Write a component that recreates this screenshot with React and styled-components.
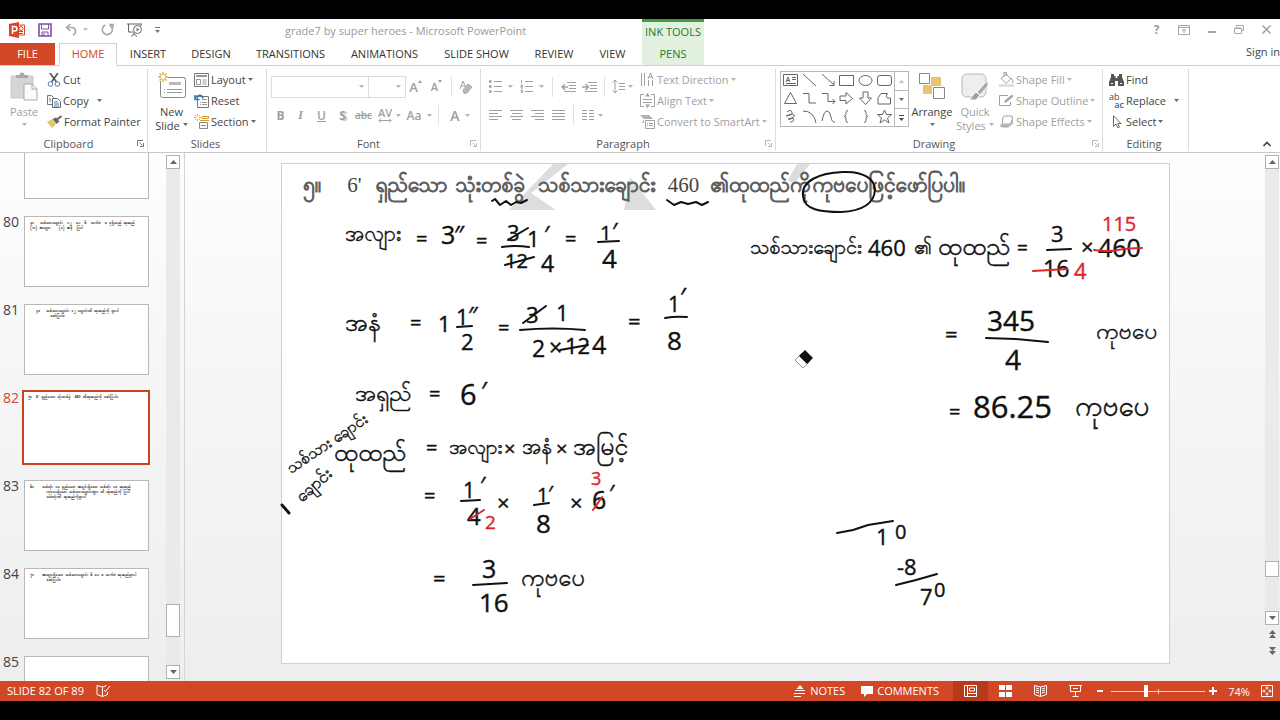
import React, { useState } from "react";
import styled, { createGlobalStyle } from "styled-components";

const GlobalStyle = createGlobalStyle`
  * {
    box-sizing: border-box;
  }

  body {
    margin: 0;
    background-color: #000000;
    font-family: "Open Sans", "Noto Sans", sans-serif;
    font-size: 11px;
    color: #444444;
  }

  button, select, input {
    font: inherit;
    color: inherit;
    border: none;
    background: none;
    padding: 0;
    margin: 0;
  }
`;

const Screen = styled.div`
  display: flex;
  flex-direction: column;
  height: 100vh;
  padding: 19px 0;
  background-color: #000000;
`;

const Window = styled.div`
  display: flex;
  flex-direction: column;
  flex: 1;
  min-height: 0;
  background-color: #ffffff;
  overflow: hidden;
`;

/* ---------- title bar ---------- */

const TitleBar = styled.header`
  display: flex;
  height: 24px;
  flex-shrink: 0;
`;

const QuickAccess = styled.div`
  display: flex;
  align-items: center;
  gap: 13px;
  width: 285px;
  padding: 0 0 3px 9px;
`;

const ButtonPair = styled.div`
  display: flex;
  align-items: center;
  gap: 4px;
`;

const IconButton = styled.button`
  display: flex;
  align-items: center;
  justify-content: center;
  min-width: ${(props) => props.$w || 0}px;
  height: ${(props) => props.$h || 18}px;
  color: ${(props) => props.$color || "inherit"};
`;

const FileTitle = styled.h1`
  width: 357px;
  margin: 0;
  font-size: 11px;
  font-weight: 400;
  line-height: 24px;
  color: #999999;
`;

const ContextTitle = styled.div`
  width: 62px;
  border-top: 3px solid #3f9a48;
  background-color: #e2f0e0;
  color: #1f7a26;
  line-height: 19px;
  text-align: center;
`;

const WindowButtons = styled.div`
  display: flex;
  justify-content: flex-end;
  align-items: center;
  flex: 1;
  padding: 0 0 3px;
`;

/* ---------- tabs ---------- */

const Tabs = styled.nav`
  display: flex;
  height: 23px;
  flex-shrink: 0;
  border-bottom: 1px solid #d0d0d0;
`;

const Tab = styled.button`
  width: ${(props) => props.$w}px;
  height: 22px;
  padding-bottom: 1px;
  white-space: nowrap;
  color: #333333;
`;

const FileTab = styled(Tab)`
  background-color: #d24726;
  color: #ffffff;
  margin-right: 4px;
`;

const ActiveTab = styled(Tab)`
  height: 23px;
  padding-bottom: 2px;
  border: 1px solid #d0d0d0;
  border-bottom-color: #ffffff;
  background-color: #ffffff;
  color: #d24726;
`;

const ContextTab = styled(Tab)`
  margin-left: 3px;
  background-color: #e2f0e0;
  color: #1f7a26;
`;

const SignIn = styled.button`
  margin-left: auto;
  height: 16px;
  white-space: nowrap;
`;

/* ---------- ribbon ---------- */

const Ribbon = styled.div`
  display: flex;
  height: 87px;
  flex-shrink: 0;
  padding-top: 3px;
  border-bottom: 1px solid #c8c8c8;
`;

const Group = styled.section`
  display: flex;
  flex-direction: column;
  width: ${(props) => props.$w}px;
  height: 82px;
  flex-shrink: 0;
  border-right: 1px solid #dcdcdc;
  color: ${(props) => (props.$off ? "#a0a0a0" : "#444444")};
`;

const GroupBody = styled.div`
  display: flex;
  height: 67px;
  flex-shrink: 0;
  padding-left: ${(props) => props.$left}px;
`;

const GroupFoot = styled.footer`
  display: flex;
  align-items: center;
  height: 15px;
  padding-right: 3px;
  color: #555555;
`;

const GroupName = styled.span`
  flex: 1;
  text-align: center;
`;

const BigButton = styled.button`
  display: flex;
  flex-direction: column;
  align-items: center;
  width: ${(props) => props.$w}px;
  height: 67px;
  padding-top: 3px;
  line-height: 14px;
  color: ${(props) => (props.$off ? "#a0a0a0" : "#444444")};

  svg:first-child {
    margin-bottom: 3px;
  }
`;

const CaretLine = styled.span`
  display: flex;
  align-items: center;
  gap: 3px;
  height: 14px;
`;

const Stack = styled.div`
  display: flex;
  flex-direction: column;
  margin-left: ${(props) => props.$left || 0}px;
`;

const RowButton = styled.button`
  display: flex;
  align-items: center;
  gap: 2px;
  height: 21px;
  white-space: nowrap;
  color: ${(props) => (props.$off ? "#a0a0a0" : "#444444")};
`;

const ToolRow = styled.div`
  display: flex;
  align-items: center;
  height: ${(props) => props.$h}px;
`;

const Divider = styled.span`
  width: 1px;
  height: 20px;
  margin: 0 ${(props) => props.$gap || 7}px;
  background-color: #e0e0e0;
`;

const Combo = styled.label`
  display: flex;
  align-items: center;
  width: ${(props) => props.$w}px;
  height: 22px;
  margin-right: -1px;
  padding-right: 4px;
  border: 1px solid #dcdcdc;
`;

const ComboSelect = styled.select`
  flex: 1;
  min-width: 0;
  height: 20px;
  appearance: none;
  outline: none;
`;

const Glyph = styled.button`
  width: ${(props) => props.$w || 21}px;
  height: 20px;
  font-size: ${(props) => props.$size || 12}px;
  font-weight: ${(props) => (props.$bold ? 700 : 600)};
  font-style: ${(props) => (props.$italic ? "italic" : "normal")};
  text-decoration: ${(props) => props.$line || "none"};
  text-shadow: ${(props) => (props.$shadow ? "2px 1px 1px #cccccc" : "none")};
  font-family: ${(props) => (props.$italic ? '"Liberation Serif", serif' : "inherit")};
  color: #a0a0a0;
`;

const SizeButton = styled.button`
  display: flex;
  align-items: flex-start;
  justify-content: center;
  width: 21px;
  height: 18px;
  font-size: ${(props) => props.$size}px;
  font-weight: 600;
  line-height: 18px;

  svg {
    margin-top: 2px;
  }
`;

const SpacingButton = styled.button`
  display: flex;
  flex-direction: column;
  align-items: center;
  width: 22px;
  font-weight: 600;
  line-height: 11px;
`;

const Gallery = styled.div`
  display: flex;
  width: 129px;
  height: 56px;
  margin-top: 2px;
  border: 1px solid #b8b8b8;
`;

const ShapeGrid = styled.div`
  display: grid;
  grid-template-columns: repeat(6, 1fr);
  grid-template-rows: repeat(3, 1fr);
  flex: 1;
`;

const GalleryBar = styled.div`
  display: grid;
  grid-template-rows: repeat(3, 1fr);
  width: 14px;
  border-left: 1px solid #b8b8b8;

  button + button {
    border-top: 1px solid #b8b8b8;
  }
`;

const RibbonEnd = styled.div`
  display: flex;
  flex: 1;
  align-items: flex-end;
  justify-content: flex-end;
  padding: 0 9px 4px 0;
`;

/* ---------- work area ---------- */

const Work = styled.main`
  display: flex;
  flex: 1;
  min-height: 0;
  background: linear-gradient(#fefefe, #f6f6f6 40%, #eeeeee);
`;

const ThumbPane = styled.aside`
  display: flex;
  width: 185px;
  flex-shrink: 0;
  border-right: 1px solid #d4d4d4;
`;

const ThumbList = styled.ol`
  flex: 1;
  margin: 0;
  padding: 0;
  list-style: none;
  overflow: hidden;

  li:first-child {
    margin-top: -27px;
  }
`;

const ThumbItem = styled.li`
  display: flex;
  height: 88px;
  color: ${(props) => (props.$active ? "#d24726" : "#444444")};
`;

const ThumbNumber = styled.span`
  width: 22px;
  padding-left: 3px;
  font-size: 14px;
  line-height: 15px;
`;

const Thumb = styled.button`
  display: block;
  width: ${(props) => (props.$active ? 128 : 125)}px;
  height: ${(props) => (props.$active ? 75 : 71)}px;
  margin: ${(props) => (props.$active ? "0" : "2px 0 0 2px")};
  padding: ${(props) => (props.$active ? "3px 4px" : "4px 5px")};
  border: ${(props) => (props.$active ? "2px solid #c8431f" : "1px solid #b8b8b8")};
  background-color: #ffffff;
  color: #222222;
  font-family: "Padauk", "Noto Sans Myanmar", sans-serif;
  font-size: 4px;
  font-weight: 700;
  line-height: 5px;
  text-align: left;
  white-space: pre;
  overflow: hidden;
`;

const ThumbText = styled.span`
  display: flex;
  flex-direction: column;
  height: 100%;
`;

const ScrollBar = styled.div`
  display: flex;
  flex-direction: column;
  width: 14px;
  flex-shrink: 0;
  margin: ${(props) => props.$margin};
`;

const ScrollButton = styled.button`
  display: flex;
  align-items: center;
  justify-content: center;
  height: 14px;
  border: 1px solid #b0b0b0;
  background-color: #ffffff;
  color: #666666;
`;

const ScrollTrack = styled.div`
  display: flex;
  flex-direction: column;
  justify-content: flex-end;
  flex: 1;
  padding-bottom: ${(props) => props.$after}px;
  background-color: #eaeaea;
`;

const ScrollThumb = styled.div`
  height: ${(props) => props.$h}px;
  border: 1px solid #b0b0b0;
  background-color: #ffffff;
`;

const JumpButton = styled.button`
  display: flex;
  justify-content: center;
  align-items: center;
  height: 17px;
  color: #666666;
`;

const Stage = styled.div`
  flex: 1;
  min-width: 0;
  padding: 10px 95px 0 96px;
`;

const Slide = styled.article`
  position: relative;
  aspect-ratio: 889 / 501;
  border: 1px solid #d0d0d0;
  background-color: #ffffff;
`;

const SlideTitle = styled.h2`
  display: flex;
  position: relative;
  margin: 0;
  padding: 6px 0 0 21px;
  font-family: "Liberation Serif", "Padauk", "Noto Sans Myanmar", serif;
  font-size: 21px;
  font-weight: 400;
  line-height: 30px;
  white-space: nowrap;
  color: #444444;
`;

const TitlePart = styled.span`
  margin-right: ${(props) => props.$after}px;
  -webkit-text-stroke: ${(props) => (props.$digits ? "0" : "1px #606060")};
`;

const Layer = styled.svg`
  position: absolute;
  inset: 0;
  width: 100%;
  height: 100%;
  overflow: visible;
  font-family: "Open Sans", "Padauk", "Noto Sans Myanmar", sans-serif;
`;

/* ---------- status bar ---------- */

const StatusBar = styled.footer`
  display: flex;
  align-items: center;
  height: 20px;
  flex-shrink: 0;
  padding: 0 7px;
  background-color: #d24726;
  color: #ffffff;
`;

const StatusButton = styled.button`
  display: flex;
  align-items: center;
  gap: 4px;
  height: 20px;
  padding-bottom: 1px;
  margin-right: ${(props) => props.$after || 0}px;
`;

const StatusEnd = styled.div`
  display: flex;
  align-items: center;
  margin-left: auto;
`;

const ViewButton = styled.button`
  display: flex;
  align-items: center;
  justify-content: center;
  width: 35px;
  height: 20px;
  background-color: ${(props) => (props.$on ? "#b73a1b" : "transparent")};
`;

const Zoom = styled.input`
  width: 94px;
  height: 12px;
  margin: 0 4px;
  appearance: none;
  background: linear-gradient(#f6cfc5, #f6cfc5) center / 100% 1px no-repeat,
    linear-gradient(#f6cfc5, #f6cfc5) center / 1px 5px no-repeat;

  &::-webkit-slider-thumb {
    appearance: none;
    width: 4px;
    height: 12px;
    background-color: #ffffff;
  }
`;

const ZoomValue = styled.output`
  width: 44px;
  text-align: center;
`;

/* ---------- icons ---------- */

function Icon({ w = 16, h = 16, sw = 1, children }) {
  return (
    <svg
      width={w}
      height={h}
      viewBox={`0 0 ${w} ${h}`}
      fill="none"
      stroke="currentColor"
      strokeWidth={sw}
      aria-hidden="true"
    >
      {children}
    </svg>
  );
}

const Caret = () => (
  <Icon w={5} h={3}>
    <path d="M0 0h5L2.500 3z" fill="currentColor" fillOpacity=".8" stroke="none" />
  </Icon>
);

const Launcher = ({ off }) => (
  <IconButton $h={12} $color={off ? "#b8b8b8" : "#777777"} aria-label="More options">
    <Icon w={7} h={7}>
      <path d="M.5 6V.5H6M2.500 2.500l3 3M6.500 3v3.500H3" />
    </Icon>
  </IconButton>
);

const UpTriangle = () => (
  <Icon w={7} h={4}>
    <path d="M0 4h7L3.500 0z" fill="currentColor" stroke="none" />
  </Icon>
);

const DownTriangle = () => (
  <Icon w={7} h={4}>
    <path d="M0 0h7L3.500 4z" fill="currentColor" stroke="none" />
  </Icon>
);

const AppIcon = () => (
  <Icon w={16} h={16}>
    <path d="M9 3h6.500v10H9" fill="#fff" stroke="#d24726" />
    <path d="M10 9.500h4M10 11.500h4" stroke="#d24726" />
    <circle cx="12" cy="6.500" r="2" stroke="#d24726" />
    <path d="M0 2L10 0v16L0 14z" fill="#d24726" stroke="none" />
    <path d="M3.500 12V4.500h2.200a2 2 0 010 4.500H3.500" stroke="#fff" strokeWidth="1.500" />
  </Icon>
);

const SaveIcon = () => (
  <Icon w={14} h={14}>
    <path d="M1 1h12v12H1z" stroke="#7f4fa8" strokeWidth="1.600" />
    <path d="M3.500 1v5h7V1M4 13V9h6v4M6 10v3" stroke="#7f4fa8" />
  </Icon>
);

const UndoIcon = () => (
  <Icon w={14} h={13} sw={1.6}>
    <path d="M5.500 1L1.500 4.500l4 3.500M2 4.500h6a4 4 0 010 7.500" />
  </Icon>
);

const RedoIcon = () => (
  <Icon w={13} h={13} sw={1.6}>
    <path d="M8.500 1.500h3.500v3.500M4.500 2a5 5 0 105 .8l2-1.500" />
  </Icon>
);

const ShowIcon = () => (
  <Icon w={15} h={14}>
    <path d="M0 1h15M1.500 1v8H6M14 1v2M7 9v2M4 13.500l3-2.500 3 2.500" />
    <circle cx="10.500" cy="6.500" r="4" fill="#fff" />
    <path d="M9.500 4.500v4L12.500 6.500z" fill="#4c9a7a" stroke="none" />
  </Icon>
);

const PasteIcon = () => (
  <Icon w={28} h={30}>
    <path d="M1 4h22v22H1z" fill="#d6d4d6" stroke="#cccccc" />
    <path d="M6 6V3h3.500a2.500 2.500 0 015 0H18v3z" fill="#a8a8a8" stroke="none" />
    <path d="M14 12h8l5 5v11H14z" fill="#fafafa" stroke="#aaaaaa" />
    <path d="M22 12v5h5" stroke="#aaaaaa" />
  </Icon>
);

const CutIcon = () => (
  <Icon w={14} h={14}>
    <path d="M3 0l6.500 9M11 0L4.500 9" stroke="#555" strokeWidth="1.600" />
    <circle cx="3.500" cy="11" r="2.300" stroke="#4a7ebb" />
    <circle cx="10.500" cy="11" r="2.300" stroke="#4a7ebb" />
  </Icon>
);

const CopyIcon = () => (
  <Icon w={14} h={14}>
    <path d="M.5 1.500h4l2 2v7h-6z" fill="#fff" stroke="#777" />
    <path d="M5.500 4.500h5l3 3v6h-8z" fill="#fff" stroke="#666" />
    <path d="M2 5h2M2 7h2M7 8h4M7 10h5M7 12h5" stroke="#4a7ebb" />
  </Icon>
);

const PainterIcon = () => (
  <Icon w={15} h={14}>
    <path d="M0 7l5-3 4 5-4 4z" fill="#e8c56d" stroke="none" />
    <path d="M5.500 4L9 2.500l3.500 4L9.500 9z" fill="#666" stroke="none" />
    <path d="M10 4.500L14.500 1" stroke="#666" strokeWidth="2" />
  </Icon>
);

const Spark = () => (
  <path
    d="M5 0v3M5 7v3M0 5h3M7 5h3M1.500 1.500l2 2M6.500 6.500l2 2M8.500 1.500l-2 2M3.500 6.500l-2 2"
    stroke="#e3a73a"
    strokeWidth="1.300"
  />
);

const NewSlideIcon = () => (
  <Icon w={28} h={30}>
    <rect x="2.500" y="5.500" width="25" height="20" rx="2" fill="#fff" stroke="#888" />
    <path d="M11 11.500h12" stroke="#bbb" strokeWidth="3" />
    <path d="M6 17.500h1M9 17.500h15M6 20.500h1M9 20.500h15" stroke="#999" />
    <circle cx="5" cy="5" r="5" fill="#fff" stroke="none" />
    <Spark />
  </Icon>
);

const LayoutIcon = () => (
  <Icon w={15} h={14}>
    <path d="M.5.500h14v13H.5z" stroke="#777" />
    <path d="M2 3h11" stroke="#999" strokeWidth="2" />
    <path d="M2.500 6.500h4v5h-4zM8.500 7h4M8.500 9h4M8.500 11h4" stroke="#999" />
  </Icon>
);

const ResetIcon = () => (
  <Icon w={15} h={14}>
    <path d="M3.500 2.500h11v11h-11z" fill="#fff" stroke="#777" />
    <path d="M8 5.500h5M6 8.500h1M8 8.500h5M6 10.500h1M8 10.500h5" stroke="#999" />
    <path d="M1 1v4.500h4.500M1 5.500c1-5 7-5.500 8-1" stroke="#3878b8" strokeWidth="1.600" />
  </Icon>
);

const SectionIcon = () => (
  <Icon w={15} h={15}>
    <path d="M8 2.500h6.500v2H8zM6 6.500h9" stroke="#d89b3c" />
    <path d="M5.500 8.500h8v6h-8zM7 11.500h5" stroke="#888" />
    <g transform="scale(.7)">
      <Spark />
    </g>
  </Icon>
);

const EraserIcon = () => (
  <Icon w={14} h={14}>
    <path d="M1 9L4 1l3 7M2 6h4" />
    <path d="M4 10l5-6 4 3-5 6-3 .5z" fill="#b8b8b8" stroke="#aaa" />
  </Icon>
);

const Bullets = ({ numbered }) => (
  <Icon w={13} h={13}>
    <path d="M5 1.500h8M5 6.500h8M5 11.500h8" />
    {numbered ? (
      <path d="M1.500 0v3M.5 5h2v1.500H1V8h2M.5 10h2v3h-2M1 11.500h1" />
    ) : (
      <path d="M0 1.500h2.500M0 6.500h2.500M0 11.500h2.500" strokeWidth="2.500" />
    )}
  </Icon>
);

const Indent = ({ back }) => (
  <Icon w={15} h={12}>
    <path d="M6 1.500h9M8 4.500h7M8 7.500h7M3 10.500h12" />
    <path
      d={back ? "M7 6H1M4 3L1 6l3 3" : "M0 6h6M3.500 3l3 3-3 3"}
      strokeWidth="1.400"
    />
  </Icon>
);

const Spacing = () => (
  <Icon w={13} h={15}>
    <path d="M3 1v13M.5 3.500L3 1l2.500 2.500M.5 11.500L3 14l2.500-2.500M7 4.500h6M7 7.500h6M7 10.500h6" />
  </Icon>
);

const lineSets = {
  left: "M0 .5h13M0 3.500h9M0 6.500h13M0 9.500h9",
  center: "M0 .5h13M2 3.500h9M0 6.500h13M2 9.500h9",
  right: "M0 .5h13M4 3.500h9M0 6.500h13M4 9.500h9",
  full: "M0 .5h13M0 3.500h13M0 6.500h13M0 9.500h13",
  columns: "M0 .5h5M0 3.500h5M0 6.500h5M0 9.500h5M7 .5h5M7 3.500h5M7 6.500h5M7 9.500h5",
};

const Lines = ({ kind }) => (
  <Icon w={13} h={10}>
    <path d={lineSets[kind]} />
  </Icon>
);

const DirectionIcon = () => (
  <Icon w={15} h={15}>
    <path d="M1.500 1v13M4.500 1v13M8.500 8v6M12.500 8v6M8 7l2.500-6L13 7M9 5h3" />
  </Icon>
);

const AlignTextIcon = () => (
  <Icon w={15} h={15}>
    <path d="M4 1.500H.5v12H4M11 1.500h3.500v12H11M3 6.500h9M3 9.500h9" />
    <path d="M7.500 0L5 3.500h5zM7.500 15L5 11.500h5z" fill="currentColor" stroke="none" />
  </Icon>
);

const SmartArtIcon = () => (
  <Icon w={15} h={15}>
    <path d="M0 1h9l4 4H4v4H2l2-4z" fill="#b0b0b0" stroke="none" />
    <path d="M5.500 6.500h9v8h-9zM7 9.500h1M9 9.500h4M7 11.500h1M9 11.500h4" />
  </Icon>
);

const ArrangeIcon = () => (
  <Icon w={26} h={30}>
    <path d="M12 5h10v9h-9v8H4v-9h8z" fill="#e9c46a" stroke="none" />
    <path d="M.5 1.500h10v10H.5zM14.500 15.500h11v11h-11z" fill="#fff" stroke="#888" />
  </Icon>
);

const StylesIcon = () => (
  <Icon w={28} h={30}>
    <rect x="1" y="2" width="24" height="23" rx="5" fill="#efedef" stroke="#b8b8b8" />
    <path d="M27 9v5l-8 9-3-3 8-9z" fill="#a8a8a8" stroke="#fff" />
    <path d="M15 20l4 3-4 5H8c3-1 3-6 7-8z" fill="#a0a0a0" stroke="#fff" />
  </Icon>
);

const FillIcon = () => (
  <Icon w={15} h={15}>
    <path d="M2 6.500L7 2l5 5-5 4.500zM5 5V0.500h2.500V4M12 6c2 2 2 3 1.500 5" />
    <path d="M0 13.500h15" stroke="#e0e0e0" strokeWidth="3" />
  </Icon>
);

const OutlineIcon = () => (
  <Icon w={15} h={14}>
    <path d="M9 1.500H.5v10h11V8" />
    <path d="M5 9l1-3 7-5.500 1.500 2L8 8z" fill="#a8a8a8" stroke="none" />
  </Icon>
);

const EffectsIcon = () => (
  <Icon w={15} h={14}>
    <path d="M3 9l1-7q.5-1 2-1h6q2 0 1.500 2l-1.500 5q-.5 1-2 1z" />
    <path d="M1 9.500q0 3 3 3h5l5-4V4l-3 5.500z" fill="#b0b0b0" stroke="none" />
  </Icon>
);

const FindIcon = () => (
  <Icon w={15} h={13}>
    <path
      d="M2 1h3v2h1.500v2h2V3H10V1h3v3l2 5v4H9V8H6v5H0V9l2-5z"
      fill="#555"
      stroke="none"
    />
    <path d="M2 10.500h2M11 10.500h2" stroke="#fff" />
  </Icon>
);

const SelectIcon = () => (
  <Icon w={15} h={14}>
    <path d="M4.500.800v10.500L7 9l2 4 1.500-1L8.800 8.500H12z" fill="#fff" stroke="#666" />
  </Icon>
);

const ReplaceMark = styled.span`
  display: grid;
  width: 15px;
  font-size: 9px;
  line-height: 8px;
  text-align: left;

  b {
    font-weight: 600;
    color: #2f62a8;
    text-align: right;
  }
`;

const shapes = [
  "M.5 1.500h14v11H.5zM3 9l2-5 2 5M4 7.500h2M9 4.500h4M9 6.500h4M3 10.500h10",
  "M1 1l13 12",
  "M1 1l12 11M13 8v4.500H8.500",
  "M.5 2.500h14v10H.5z",
  "M1 7.500a6.500 5 0 1013 0a6.500 5 0 10-13 0z",
  "M3 2.500h9q2.500 0 2.500 2.500v5q0 2.500-2.500 2.500H3q-2.500 0-2.500-2.500V5Q.5 2.500 3 2.500z",
  "M7.500 1.500l6 11h-12z",
  "M1 2.500h6v9.500h7",
  "M1 2.500h6v8h7M11.500 8l2.500 2.500-2.500 2.500",
  "M1 5h6V1.500l6.500 6L7 13v-3.500H1z",
  "M5 1v6H1.500l6 6.500 6-6.500H10V1z",
  "M4 2.500h6.500q-2.500 3 0 4.500h3v6H1V7z",
  "M4 3q4-3 5 0t-6 4q6-3 8-1t-6 4q2 1 5-1q2 4-3 4",
  "M1 2q11 0 13 12",
  "M1 12q2-10 5-10t4 6 4 5",
  "M9 1.500q-2 0-2 2v2q0 2-2 2 2 0 2 2v2q0 2 2 2",
  "M6 1.500q2 0 2 2v2q0 2 2 2-2 0-2 2v2q0 2-2 2",
  "M7.500 1l2 4.500h5l-4 3.500 1.500 5-4.500-3L3 14l1.500-5-4-3.500h5z",
];

/* ---------- slide content ---------- */

// x, baseline, size, text; written with the pen on slide 82
const notes = [
  [345, 241, 21, "အလျား"],
  [416, 246, 20, "="],
  [441, 244, 25, "3"],
  [454, 244, 25, "″"],
  [476, 248, 20, "="],
  [507, 241, 22, "3"],
  [527, 247, 22, "1"],
  [544, 243, 24, "′"],
  [505, 268, 20, "12"],
  [541, 272, 23, "4"],
  [565, 246, 20, "="],
  [600, 240, 20, "1"],
  [612, 240, 24, "′"],
  [602, 268, 26, "4"],
  [345, 331, 25, "အနံ"],
  [410, 330, 20, "="],
  [438, 332, 22, "1"],
  [456, 325, 22, "1"],
  [468, 324, 24, "″"],
  [461, 350, 22, "2"],
  [498, 335, 20, "="],
  [526, 323, 22, "3"],
  [556, 321, 22, "1"],
  [532, 357, 23, "2"],
  [549, 356, 23, "×"],
  [565, 354, 22, "12"],
  [592, 354, 25, "4"],
  [628, 329, 22, "="],
  [668, 312, 21, "1"],
  [680, 306, 26, "′"],
  [667, 350, 26, "8"],
  [355, 401, 23, "အရှည်"],
  [429, 401, 20, "="],
  [460, 405, 29, "6"],
  [481, 400, 26, "′"],
  [334, 461, 25, "ထုထည်"],
  [426, 455, 20, "="],
  [449, 454, 20, "အလျား"],
  [504, 456, 20, "×"],
  [522, 454, 21, "အနံ"],
  [556, 456, 20, "×"],
  [573, 455, 25, "အမြင့်"],
  [424, 503, 20, "="],
  [463, 498, 21, "1"],
  [480, 494, 24, "′"],
  [467, 525, 24, "4"],
  [497, 511, 22, "×"],
  [537, 502, 20, "1"],
  [548, 502, 22, "′"],
  [536, 533, 26, "8"],
  [570, 511, 22, "×"],
  [592, 509, 25, "6"],
  [609, 502, 24, "′"],
  [433, 586, 22, "="],
  [482, 578, 25, "3"],
  [479, 612, 26, "16"],
  [521, 586, 24, "ကုဗပေ"],
  [750, 254, 20, "သစ်သားချောင်း"],
  [868, 256, 22, "460"],
  [914, 254, 20, "၏"],
  [938, 255, 25, "ထုထည်"],
  [1017, 254, 19, "="],
  [1051, 242, 22, "3"],
  [1043, 277, 23, "16"],
  [1081, 255, 22, "×"],
  [1098, 257, 25, "460"],
  [945, 342, 22, "="],
  [987, 331, 28, "345"],
  [1005, 370, 28, "4"],
  [1096, 339, 23, "ကုဗပေ"],
  [949, 419, 20, "="],
  [973, 418, 31, "86.25"],
  [1075, 416, 28, "ကုဗပေ"],
  [876, 545, 22, "1"],
  [895, 539, 20, "0"],
  [897, 575, 22, "-8"],
  [920, 605, 22, "7"],
  [934, 597, 20, "0"],
];

const redNotes = [
  [485, 529, 19, "2"],
  [591, 485, 18, "3"],
  [1102, 231, 20, "115"],
  [1074, 279, 22, "4"],
];

const tiltedNotes = [
  [291, 474, 16, "သစ်သား ချောင်း", -34],
  [302, 503, 17, "ချောင်း", -42],
];

const strokes = [
  "M492 201l3-2 5 6 6-4 5 4 5-3 5 1 6-3",
  "M667 200l7 5 7-3 7 2 8-2 6 3 6-3",
  "M803 196c-2-15 16-23 40-24c22-1 32 8 32 18c-1 14-14 21-34 22c-20 0-37-2-38-16z",
  "M502 247q13-2 27 0M598 242l21-1M457 327l15-1M520 330q33-3 65 0M665 318q10-2 22-1",
  "M508 240l20-12M505 265l29-8M523 323l23-17M560 350l28-5",
  "M461 501l19-1M534 505l15-2M473 585l34-2M1047 250l24-1M986 338l30 1 32 3",
  "M837 533l16-3 15-5 25-4M896 585l20-5 21-6",
];

const redStrokes = [
  "M470 519l14-9M593 510l9-13",
  "M1033 271l34-2M1094 250q14 2 24 0t24-2",
];

function Ink() {
  return (
    <Layer viewBox="282 164 887 499" preserveAspectRatio="none">
      <g fill="#111111" stroke="#111111" strokeWidth=".4">
        {notes.map(([x, y, size, text]) => (
          <text key={`${x}-${y}`} x={x} y={y} fontSize={size}>
            {text}
          </text>
        ))}
        {tiltedNotes.map(([x, y, size, text, angle]) => (
          <text key={x} fontSize={size} transform={`translate(${x} ${y}) rotate(${angle})`}>
            {text}
          </text>
        ))}
      </g>
      <g fill="#e0262b" stroke="#e0262b" strokeWidth=".4">
        {redNotes.map(([x, y, size, text]) => (
          <text key={x} x={x} y={y} fontSize={size}>
            {text}
          </text>
        ))}
      </g>
      <g fill="none" stroke="#111111" strokeWidth="2" strokeLinecap="round" strokeLinejoin="round">
        {strokes.map((d) => (
          <path key={d} d={d} />
        ))}
        <path d="M282 505l7 8" strokeWidth="3" />
      </g>
      <g fill="none" stroke="#e0262b" strokeWidth="2" strokeLinecap="round">
        {redStrokes.map((d) => (
          <path key={d} d={d} />
        ))}
      </g>
      <path d="M795 360l7-7 8 8-7 7z" fill="#fff" stroke="#999" />
      <path d="M799 356l6-6 8 8-6 6z" fill="#111" />
    </Layer>
  );
}

function Watermark() {
  return (
    <Layer viewBox="282 164 887 499" preserveAspectRatio="none">
      <path
        d="M553 164h15l-58 46h-1zM531 193l25 17h-47zM630 177l26 33h-32zM797 164h13l-16 20-6-4z"
        fill="#dddddd"
      />
    </Layer>
  );
}

// text and the space after it
const titleParts = [
  ["၅။", 26],
  ["6'", 14, true],
  ["ရှည်သော", 8],
  ["သုံးတစ်ခွဲ", 13],
  ["သစ်သားချောင်း", 12],
  ["460", 11, true],
  ["၏ထုထည်ကို", 2],
  ["ကုဗပေဖြင့်ဖော်ပြပါ။", 0],
];

const thumbs = [
  { id: 79, lines: [] },
  {
    id: 80,
    lines: [
      "၃။   သစ်သားချောင်း  ၁၂  ပေ  ၆  လက်မ  ၈ ခုရှိသည် ထုထည်",
      "(က) အလျား    (ခ) အနံ  ပြပါ",
    ],
  },
  {
    id: 81,
    lines: [
      "   ၄။   သစ်သားချောင်း ၁၂ ချောင်း၏ ထုထည်ကို ရှာပါ",
      "          ဖော်ပြပါ။",
    ],
  },
  { id: 82, lines: ["၅။  6' ရှည်သော သုံးတစ်ခွဲ  460 ၏ထုထည်ကို ဖော်ပြပါ။"] },
  {
    id: 83,
    lines: [
      "၆။    သစ်တုံး ၁၀ ရှည်သော အချင်းရှိသော သစ်တုံး ၁၀ ထုထည်",
      "        ကုဗပေရှိသော သစ်သားချောင်းများ ၏ ထုထည်ကို ပြပါ",
      "        သစ်တုံး၏ ထုထည်ကိုရှာပါ",
    ],
  },
  {
    id: 84,
    lines: [
      "၇။    အလျားရှိသော သစ်သားချောင်း ၆ ပေ ၈ လက်မ ထုထည်ရှာပါ",
      "        ဖော်ပြပါ။",
    ],
  },
  { id: 85, lines: [] },
];

const tabs = [
  ["INSERT", 62],
  ["DESIGN", 64],
  ["TRANSITIONS", 95],
  ["ANIMATIONS", 93],
  ["SLIDE SHOW", 91],
  ["REVIEW", 64],
  ["VIEW", 53],
];

function Header() {
  return (
    <>
      <TitleBar>
        <QuickAccess>
          <AppIcon />
          <IconButton aria-label="Save">
            <SaveIcon />
          </IconButton>
          <ButtonPair>
            <IconButton $color="#a8a8a8" aria-label="Undo">
              <UndoIcon />
            </IconButton>
            <IconButton $color="#b0b0b0" aria-label="Undo history">
              <Caret />
            </IconButton>
          </ButtonPair>
          <IconButton $color="#a8a8a8" aria-label="Redo">
            <RedoIcon />
          </IconButton>
          <IconButton $color="#666666" aria-label="Start slide show">
            <ShowIcon />
          </IconButton>
          <IconButton $color="#777777" aria-label="Customize toolbar">
            <Icon w={5} h={6}>
              <path d="M0 .5h5" />
              <path d="M0 3h5L2.500 6z" fill="currentColor" stroke="none" />
            </Icon>
          </IconButton>
        </QuickAccess>
        <FileTitle>grade7 by super heroes - Microsoft PowerPoint</FileTitle>
        <ContextTitle>INK TOOLS</ContextTitle>
        <WindowButtons>
          <Glyph $w={27} $bold>
            ?
          </Glyph>
          <IconButton $w={28} $color="#a8a8a8" aria-label="Ribbon options">
            <Icon w={12} h={10}>
              <path d="M.5.500h11v9H.5zM.5 2.500h11M6 8V4.500M4 6l2-2 2 2" />
            </Icon>
          </IconButton>
          <IconButton $w={27} $color="#a8a8a8" aria-label="Minimize">
            <Icon w={8} h={8}>
              <path d="M0 6h8" strokeWidth="2" />
            </Icon>
          </IconButton>
          <IconButton $w={27} $color="#a8a8a8" aria-label="Restore">
            <Icon w={10} h={9}>
              <path d="M2.500 2V.5h7v5H8M.5 3.500h7v5h-7zM.5 3h7" />
            </Icon>
          </IconButton>
          <IconButton $w={28} $color="#999999" aria-label="Close">
            <Icon w={9} h={9} sw={1.4}>
              <path d="M.5.500l8 8M8.500.500l-8 8" />
            </Icon>
          </IconButton>
        </WindowButtons>
      </TitleBar>
      <Tabs>
        <FileTab $w={55}>FILE</FileTab>
        <ActiveTab $w={58}>HOME</ActiveTab>
        {tabs.map(([name, w]) => (
          <Tab key={name} $w={w}>
            {name}
          </Tab>
        ))}
        <ContextTab $w={62}>PENS</ContextTab>
        <SignIn>Sign in</SignIn>
      </Tabs>
    </>
  );
}

function HomeRibbon() {
  return (
    <Ribbon>
      <Group $w={148}>
        <GroupBody $left={5}>
          <BigButton $w={38} $off>
            <PasteIcon />
            Paste
            <CaretLine>
              <Caret />
            </CaretLine>
          </BigButton>
          <Stack $left={4}>
            <RowButton>
              <CutIcon />
              Cut
            </RowButton>
            <RowButton>
              <CopyIcon />
              Copy&nbsp;&nbsp;
              <Caret />
            </RowButton>
            <RowButton>
              <PainterIcon />
              Format Painter
            </RowButton>
          </Stack>
        </GroupBody>
        <GroupFoot>
          <GroupName>Clipboard</GroupName>
          <Launcher />
        </GroupFoot>
      </Group>

      <Group $w={119}>
        <GroupBody $left={5}>
          <BigButton $w={37}>
            <NewSlideIcon />
            New
            <CaretLine>
              Slide
              <Caret />
            </CaretLine>
          </BigButton>
          <Stack $left={4}>
            <RowButton>
              <LayoutIcon />
              Layout
              <Caret />
            </RowButton>
            <RowButton>
              <ResetIcon />
              Reset
            </RowButton>
            <RowButton>
              <SectionIcon />
              Section
              <Caret />
            </RowButton>
          </Stack>
        </GroupBody>
        <GroupFoot>
          <GroupName>Slides</GroupName>
        </GroupFoot>
      </Group>

      <Group $w={214} $off>
        <GroupBody $left={4}>
          <Stack>
            <ToolRow $h={35}>
              <Combo $w={98}>
                <ComboSelect disabled aria-label="Font" />
                <Caret />
              </Combo>
              <Combo $w={38}>
                <ComboSelect disabled aria-label="Font size" />
                <Caret />
              </Combo>
              <SizeButton $size={13} aria-label="Increase font size">
                A
                <Icon w={4} h={3}>
                  <path d="M0 3h4L2 0z" fill="currentColor" stroke="none" />
                </Icon>
              </SizeButton>
              <SizeButton $size={11} aria-label="Decrease font size">
                A
                <Icon w={4} h={3}>
                  <path d="M0 0h4L2 3z" fill="currentColor" stroke="none" />
                </Icon>
              </SizeButton>
              <Divider $gap={4} />
              <IconButton $w={20} aria-label="Clear formatting">
                <EraserIcon />
              </IconButton>
            </ToolRow>
            <ToolRow $h={22}>
              <Glyph $w={19} $bold>
                B
              </Glyph>
              <Glyph $w={21} $italic $size={13}>
                I
              </Glyph>
              <Glyph $line="underline">U</Glyph>
              <Glyph $bold $shadow>
                S
              </Glyph>
              <Glyph $line="line-through" $size={10}>
                abc
              </Glyph>
              <SpacingButton>
                AV
                <Icon w={14} h={5}>
                  <path d="M1 2.500h12M3 .5l-2 2 2 2M11 .5l2 2-2 2" />
                </Icon>
              </SpacingButton>
              <Caret />
              <Glyph $w={26}>Aa</Glyph>
              <Caret />
              <Divider $gap={6} />
              <Glyph $w={20} $size={14}>
                A
              </Glyph>
              <Caret />
            </ToolRow>
          </Stack>
        </GroupBody>
        <GroupFoot>
          <GroupName>Font</GroupName>
          <Launcher off />
        </GroupFoot>
      </Group>

      <Group $w={295} $off>
        <GroupBody $left={4}>
          <Stack>
            <ToolRow $h={35}>
              <IconButton $w={20} aria-label="Bullets">
                <Bullets />
              </IconButton>
              <IconButton $w={11} aria-label="Bullet styles">
                <Caret />
              </IconButton>
              <IconButton $w={20} aria-label="Numbering">
                <Bullets numbered />
              </IconButton>
              <IconButton $w={11} aria-label="Number styles">
                <Caret />
              </IconButton>
              <Divider $gap={5} />
              <IconButton $w={20} aria-label="Decrease indent">
                <Indent back />
              </IconButton>
              <IconButton $w={22} aria-label="Increase indent">
                <Indent />
              </IconButton>
              <Divider $gap={4} />
              <IconButton $w={19} aria-label="Line spacing">
                <Spacing />
              </IconButton>
              <Caret />
            </ToolRow>
            <ToolRow $h={22}>
              {["left", "center", "right", "full"].map((kind) => (
                <IconButton key={kind} $w={21} aria-label={`Align ${kind}`}>
                  <Lines kind={kind} />
                </IconButton>
              ))}
              <Divider $gap={4} />
              <IconButton $w={20} aria-label="Columns">
                <Lines kind="columns" />
              </IconButton>
              <Caret />
            </ToolRow>
          </Stack>
          <Stack $left={7}>
            <RowButton $off>
              <DirectionIcon />
              Text Direction
              <Caret />
            </RowButton>
            <RowButton $off>
              <AlignTextIcon />
              Align Text
              <Caret />
            </RowButton>
            <RowButton $off>
              <SmartArtIcon />
              Convert to SmartArt
              <Caret />
            </RowButton>
          </Stack>
        </GroupBody>
        <GroupFoot>
          <GroupName>Paragraph</GroupName>
          <Launcher off />
        </GroupFoot>
      </Group>

      <Group $w={327}>
        <GroupBody $left={4}>
          <Gallery>
            <ShapeGrid>
              {shapes.map((d) => (
                <IconButton key={d} $h={17} $color="#666666" aria-label="Shape">
                  <Icon w={15} h={15}>
                    <path d={d} />
                  </Icon>
                </IconButton>
              ))}
            </ShapeGrid>
            <GalleryBar>
              <IconButton $color="#c0c0c0" aria-label="Previous shapes">
                <Icon w={5} h={3}>
                  <path d="M0 3h5L2.500 0z" fill="currentColor" stroke="none" />
                </Icon>
              </IconButton>
              <IconButton aria-label="Next shapes">
                <Caret />
              </IconButton>
              <IconButton aria-label="All shapes">
                <Icon w={5} h={6}>
                  <path d="M0 .5h5" />
                  <path d="M0 3h5L2.500 6z" fill="currentColor" stroke="none" />
                </Icon>
              </IconButton>
            </GalleryBar>
          </Gallery>
          <BigButton $w={46}>
            <ArrangeIcon />
            Arrange
            <CaretLine>
              <Caret />
            </CaretLine>
          </BigButton>
          <BigButton $w={40} $off>
            <StylesIcon />
            Quick
            <CaretLine>
              Styles
              <Caret />
            </CaretLine>
          </BigButton>
          <Stack $left={4}>
            <RowButton $off>
              <FillIcon />
              Shape Fill
              <Caret />
            </RowButton>
            <RowButton $off>
              <OutlineIcon />
              Shape Outline
              <Caret />
            </RowButton>
            <RowButton $off>
              <EffectsIcon />
              Shape Effects
              <Caret />
            </RowButton>
          </Stack>
        </GroupBody>
        <GroupFoot>
          <GroupName>Drawing</GroupName>
          <Launcher off />
        </GroupFoot>
      </Group>

      <Group $w={86}>
        <GroupBody $left={6}>
          <Stack>
            <RowButton>
              <FindIcon />
              Find
            </RowButton>
            <RowButton>
              <ReplaceMark>
                ab
                <b>ac</b>
              </ReplaceMark>
              Replace&nbsp;&nbsp;
              <Caret />
            </RowButton>
            <RowButton>
              <SelectIcon />
              Select
              <Caret />
            </RowButton>
          </Stack>
        </GroupBody>
        <GroupFoot>
          <GroupName>Editing</GroupName>
        </GroupFoot>
      </Group>

      <RibbonEnd>
        <IconButton $h={8} aria-label="Collapse the ribbon">
          <Icon w={8} h={6} sw={1.6}>
            <path d="M.5 5L4 1.500 7.500 5" />
          </Icon>
        </IconButton>
      </RibbonEnd>
    </Ribbon>
  );
}

function App() {
  const [current, setCurrent] = useState(82);
  const [zoom, setZoom] = useState(74);

  return (
    <Screen>
      <GlobalStyle />
      <Window>
        <Header />
        <HomeRibbon />
        <Work>
          <ThumbPane>
            <ThumbList>
              {thumbs.map((thumb, index) => (
                <ThumbItem key={thumb.id} $active={thumb.id === current}>
                  <ThumbNumber>{index > 0 && thumb.id}</ThumbNumber>
                  <Thumb
                    $active={thumb.id === current}
                    onClick={() => setCurrent(thumb.id)}
                    aria-label={`Slide ${thumb.id}`}
                  >
                    <ThumbText>
                      {thumb.lines.map((line) => (
                        <span key={line}>{line}</span>
                      ))}
                    </ThumbText>
                  </Thumb>
                </ThumbItem>
              ))}
            </ThumbList>
            <ScrollBar $margin="2px 4px 2px 0">
              <ScrollButton aria-label="Scroll slides up">
                <UpTriangle />
              </ScrollButton>
              <ScrollTrack $after={28}>
                <ScrollThumb $h={33} />
              </ScrollTrack>
              <ScrollButton aria-label="Scroll slides down">
                <DownTriangle />
              </ScrollButton>
            </ScrollBar>
          </ThumbPane>
          <Stage>
            <Slide>
              <Watermark />
              <SlideTitle>
                {titleParts.map(([text, after, digits]) => (
                  <TitlePart key={text} $after={after} $digits={digits}>
                    {text}
                  </TitlePart>
                ))}
              </SlideTitle>
              <Ink />
            </Slide>
          </Stage>
          <ScrollBar $margin="2px 1px 22px 0">
            <ScrollButton aria-label="Scroll up">
              <UpTriangle />
            </ScrollButton>
            <ScrollTrack $after={34}>
              <ScrollThumb $h={16} />
            </ScrollTrack>
            <ScrollButton aria-label="Scroll down">
              <DownTriangle />
            </ScrollButton>
            <JumpButton aria-label="Previous slide">
              <Icon w={7} h={8}>
                <path d="M0 4h7L3.500 0zM0 8h7L3.500 4z" fill="currentColor" stroke="none" />
              </Icon>
            </JumpButton>
            <JumpButton aria-label="Next slide">
              <Icon w={7} h={8}>
                <path d="M0 0h7L3.500 4zM0 4h7L3.500 8z" fill="currentColor" stroke="none" />
              </Icon>
            </JumpButton>
          </ScrollBar>
        </Work>
        <StatusBar>
          <StatusButton $after={12}>SLIDE {current} OF 89</StatusButton>
          <StatusButton aria-label="Spelling">
            <Icon w={15} h={12}>
              <path d="M6.500 2L1 .5v9l5.500 2 5-2V7M6.500 2v9M6.500 2l4-1.500M9 7l5-6M8 5l2 2" />
            </Icon>
          </StatusButton>
          <StatusEnd>
            <StatusButton $after={16}>
              <Icon w={12} h={12}>
                <path d="M1 5.500h10M0 8.500h11M0 11.500h7" />
                <path d="M2.500 4h7L6 0z" fill="currentColor" stroke="none" />
              </Icon>
              NOTES
            </StatusButton>
            <StatusButton $after={14}>
              <Icon w={12} h={12}>
                <path d="M0 1h12v8H6l-3 3V9H0z" fill="currentColor" stroke="none" />
              </Icon>
              COMMENTS
            </StatusButton>
            <ViewButton $on aria-label="Normal view">
              <Icon w={13} h={12}>
                <path d="M.5.500h12v11H.5zM3.500.500v11M3 8.500h10" />
                <path d="M5.500 3h5v3h-5z" />
              </Icon>
            </ViewButton>
            <ViewButton aria-label="Slide sorter">
              <Icon w={13} h={12}>
                <path d="M0 0h6v5H0zM7 0h6v5H7zM0 7h6v5H0zM7 7h6v5H7z" fill="currentColor" stroke="none" />
              </Icon>
            </ViewButton>
            <ViewButton aria-label="Reading view">
              <Icon w={13} h={12}>
                <path d="M6.500 2L.5.500v9l6 2 6-2v-9zM6.500 2v9M2 3l3 1M2 5l3 1M2 7l3 1M11 3L8 4M11 5L8 6M11 7L8 8" />
              </Icon>
            </ViewButton>
            <ViewButton aria-label="Slide show">
              <Icon w={13} h={12}>
                <path d="M0 .5h13M1.500.500v6h10v-6M6.500 6v5M3.500 11.500h6M4 3.500h5" />
              </Icon>
            </ViewButton>
            <IconButton $w={14} aria-label="Zoom out">
              <Icon w={6} h={8}>
                <path d="M0 4h6" strokeWidth="2" />
              </Icon>
            </IconButton>
            <Zoom
              type="range"
              aria-label="Zoom"
              min="0"
              max="200"
              value={zoom}
              onChange={(e) => setZoom(Number(e.target.value))}
            />
            <IconButton aria-label="Zoom in">
              <Icon w={8} h={8}>
                <path d="M0 4h8M4 0v8" strokeWidth="2" />
              </Icon>
            </IconButton>
            <ZoomValue>{zoom}%</ZoomValue>
            <IconButton aria-label="Fit slide to window">
              <Icon w={12} h={12}>
                <path d="M.5.500h11v11H.5zM6 1.500v3M6 7.500v3M1.500 6h3M7.500 6h3M3 4.500v3M9 4.500v3M4.500 3h3M4.500 9h3" />
              </Icon>
            </IconButton>
          </StatusEnd>
        </StatusBar>
      </Window>
    </Screen>
  );
}

export default App;
